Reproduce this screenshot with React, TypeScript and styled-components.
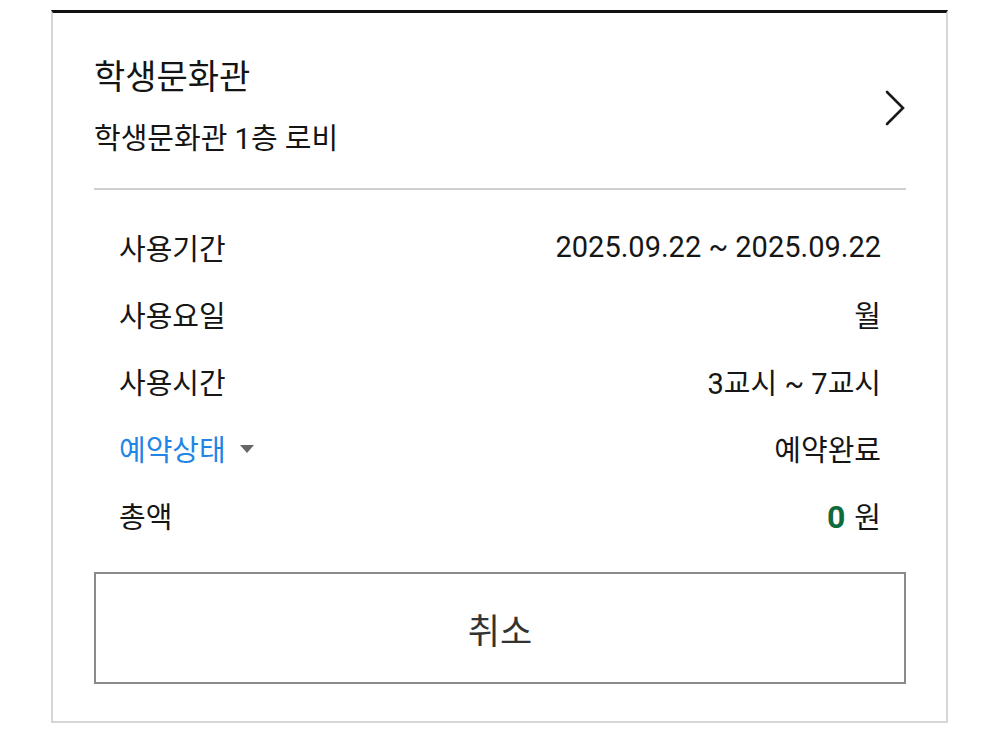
import React from "react";
import styled, { createGlobalStyle } from "styled-components";

const GlobalStyle = createGlobalStyle`
  html, body { margin: 0; padding: 0; background: #ffffff; }
  body {
    font-family: Roboto, "Noto Sans CJK KR", "Noto Sans", sans-serif;
    color: #161616;
  }
  * { box-sizing: border-box; }
`;

const Page = styled.div`
  padding: 10px 0 0 51px;
`;

const Card = styled.div`
  width: 897px;
  border: 2px solid #d6d6d6;
  border-top: 3px solid #111111;
  padding: 0 40px 37px 41px;
`;

const Header = styled.div`
  display: flex;
  align-items: center;
  justify-content: space-between;
  padding: 44px 0 29px;
  border-bottom: 2px solid #d0d0d0;
`;

const HeaderText = styled.div`
  display: flex;
  flex-direction: column;
  gap: 22px;
`;

const Title = styled.div`
  font-size: 34px;
  line-height: 40px;
  color: #141414;
`;

const Subtitle = styled.div`
  font-size: 29px;
  line-height: 40px;
  color: #141414;
`;

const Chevron = styled.svg`
  width: 22px;
  height: 38px;
`;

const Rows = styled.div`
  padding: 23px 25px 0;
  display: flex;
  flex-direction: column;
`;

const Row = styled.div`
  display: flex;
  align-items: center;
  justify-content: space-between;
  height: 67px;
  font-size: 29px;
`;

const Label = styled.div<{ $accent?: boolean }>`
  display: flex;
  align-items: center;
  gap: 14px;
  color: ${(p) => (p.$accent ? "#1f86e6" : "#161616")};
`;

const Caret = styled.span`
  width: 0;
  height: 0;
  border-left: 7px solid transparent;
  border-right: 7px solid transparent;
  border-top: 8px solid #666666;
  margin-top: 2px;
`;

const Value = styled.div`
  color: #161616;
  display: flex;
  align-items: baseline;
  gap: 9px;
`;

const Amount = styled.span`
  color: #0f6b3b;
  font-weight: 700;
  font-size: 32px;
`;

const CancelButton = styled.button`
  display: flex;
  align-items: center;
  justify-content: center;
  width: 100%;
  height: 112px;
  margin-top: 24px;
  background: #ffffff;
  border: 2px solid #8a8a8a;
  font-family: Roboto, "Noto Sans CJK KR", sans-serif;
  font-size: 35px;
  color: #333333;
  cursor: pointer;
`;

const rows = [
  { label: "사용기간", value: "2025.09.22 ~ 2025.09.22" },
  { label: "사용요일", value: "월" },
  { label: "사용시간", value: "3교시 ~ 7교시" },
];

export default function App() {
  return (
    <>
      <GlobalStyle />
      <Page>
        <Card>
          <Header>
            <HeaderText>
              <Title>학생문화관</Title>
              <Subtitle>학생문화관 1층 로비</Subtitle>
            </HeaderText>
            <Chevron viewBox="0 0 22 38" fill="none">
              <polyline
                points="3,3 19,19 3,35"
                stroke="#1a1a1a"
                strokeWidth="2.6"
                strokeLinecap="round"
                strokeLinejoin="miter"
              />
            </Chevron>
          </Header>
          <Rows>
            {rows.map((r) => (
              <Row key={r.label}>
                <Label>{r.label}</Label>
                <Value>{r.value}</Value>
              </Row>
            ))}
            <Row>
              <Label $accent>
                예약상태
                <Caret />
              </Label>
              <Value>예약완료</Value>
            </Row>
            <Row>
              <Label>총액</Label>
              <Value>
                <Amount>0</Amount>원
              </Value>
            </Row>
          </Rows>
          <CancelButton>취소</CancelButton>
        </Card>
      </Page>
    </>
  );
}
